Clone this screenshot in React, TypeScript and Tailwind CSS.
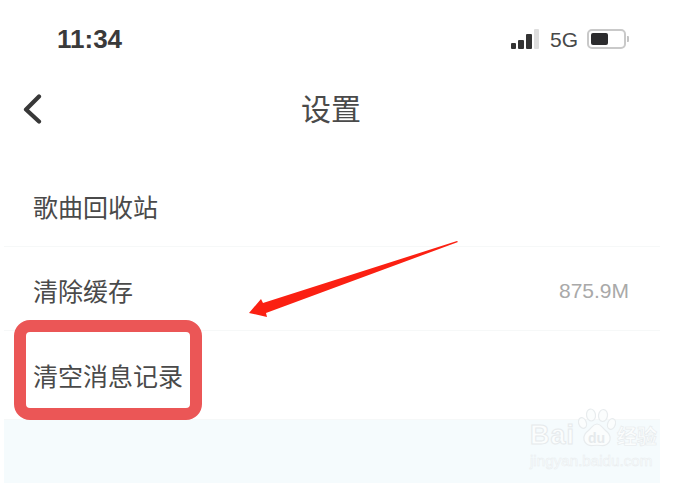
const cjk = { fontFamily: '"Noto Sans CJK SC", "Liberation Sans", sans-serif' };

const SignalBars = () => (
  <div className="flex items-end gap-[2px]">
    <div className="h-[6px] w-[5px] rounded-[1px] bg-[#333]" />
    <div className="h-[9px] w-[6px] rounded-[1px] bg-[#333]" />
    <div className="h-[15px] w-[6px] rounded-[1px] bg-[#333]" />
    <div className="h-[20px] w-[5px] rounded-[1px] bg-[#dedede]" />
  </div>
);

const Battery = () => (
  <div className="flex items-center gap-[1px]">
    <div className="flex h-[20px] w-[39px] items-stretch rounded-[5px] border-[2px] border-[#c9c9c9] p-[2px]">
      <div className="w-[17px] rounded-[2px] bg-[#2c2c2e]" />
    </div>
    <div className="h-[6px] w-[2px] rounded-r-[1px] bg-[#c4c4c4]" />
  </div>
);

const Row = ({ label, value, height, pt }: { label: string; value?: string; height: string; pt: string }) => (
  <div className={`flex items-center justify-between border-b border-[#f6f8f8] pl-[29px] pr-[31px] ${height} ${pt}`}>
    <span className="text-[25px] leading-none text-[#4a4a4a]" style={cjk}>{label}</span>
    {value && <span className="font-['Liberation_Sans'] text-[21px] leading-none text-[#a9a9a9]">{value}</span>}
  </div>
);

// watermark paw, top-left at 0,0
const Paw = () => (
  <svg width="38" height="40" viewBox="0 0 38 40" fill="#fbfdfd" stroke="#e8ecee" strokeWidth="1.2">
    <ellipse cx="4.5" cy="15" rx="3.8" ry="5.5" transform="rotate(-20 4.5 15)" />
    <ellipse cx="13" cy="7" rx="4.5" ry="6" transform="rotate(-8 13 7)" />
    <ellipse cx="25" cy="7.5" rx="4.5" ry="6" transform="rotate(8 25 7.5)" />
    <ellipse cx="33.5" cy="16" rx="3.8" ry="5.5" transform="rotate(20 33.5 16)" />
    <path d="M19 16c-4 0-5 3.500-8 6-3 2.500-6 5-5 10 1 4 5 6 9 5.500 2.500-.3 5.500-.3 8 0 4 .5 8-1.500 9-5.500 1-5-2-7.500-5-10-3-2.500-4-6-8-6Z" />
  </svg>
);

export default function App() {
  return (
    <div className="relative h-[483px] w-[691px] overflow-hidden bg-white">
      {/* Status bar */}
      <div className="flex h-[78px] items-center justify-between pl-[57px] pr-[62px]">
        <span className="font-['Liberation_Sans'] text-[26px] font-bold leading-none text-[#3a3a3a]">11:34</span>
        <div className="flex items-center gap-[10px]">
          <SignalBars />
          <span className="ml-[1px] -mr-[1px] font-['Liberation_Sans'] text-[21px] leading-none text-[#484848]">5G</span>
          <Battery />
        </div>
      </div>

      {/* Title bar */}
      <div className="relative flex h-[62px] items-center justify-center pr-[29px]">
        <svg className="absolute left-[22px] top-[16px]" width="20" height="30" viewBox="0 0 20 30" fill="none" stroke="#383838" strokeWidth="4.2" strokeLinecap="round" strokeLinejoin="round">
          <path d="M17 2.500 4 15.500 17 27.500" />
        </svg>
        <span className="-mt-[4px] text-[30px] leading-none text-[#4a4a4a]" style={cjk}>设置</span>
      </div>

      {/* Settings list */}
      <div className="ml-[4px] w-[656px]">
        <Row label="歌曲回收站" height="h-[107px]" pt="pt-[27px]" />
        <Row label="清除缓存" value="875.9M" height="h-[84px]" pt="pt-[4px]" />
        <Row label="清空消息记录" height="h-[89px]" pt="pt-[1px]" />
        <div className="h-[63px] bg-[#f5fbfd]" />
      </div>

      {/* Red highlight box */}
      <div className="absolute left-[14px] top-[320px] h-[100px] w-[188px] rounded-[16px] border-[12px] border-[#eb5656]" />

      {/* Annotation arrow */}
      <svg className="absolute left-[240px] top-[235px]" width="225" height="90" viewBox="240 235 225 90">
        <path d="M249 313 261 299 263 303 457 241 458 242 266 313 267 317Z" fill="#fb2012" />
      </svg>

      {/* Baidu watermark */}
      <div className="absolute left-[530px] top-[408px] w-[130px]">
        <div className="flex items-end whitespace-nowrap">
          <span className="font-['Liberation_Sans'] text-[27px] font-bold leading-[26px] tracking-[1px] text-[#fbfdfd] [-webkit-text-stroke:1px_#e6eaec]">Bai</span>
          <div className="relative ml-[3px] h-[40px] w-[38px] shrink-0">
            <Paw />
            <span className="absolute left-[10px] top-[23px] font-['Liberation_Sans'] text-[14px] font-bold leading-none text-[#e6eaec]">du</span>
          </div>
          <span className="ml-[1px] shrink-0 text-[20px] font-bold leading-[24px] text-[#fbfdfd] [-webkit-text-stroke:0.6px_#e6eaec]" style={cjk}>经验</span>
        </div>
        <div className="mt-[4px] whitespace-nowrap font-['Liberation_Sans'] text-[15.200px] leading-[18px] text-[#fbfdfd] [-webkit-text-stroke:0.5px_#e8ecee]">jingyan.baidu.com</div>
      </div>
    </div>
  );
}
